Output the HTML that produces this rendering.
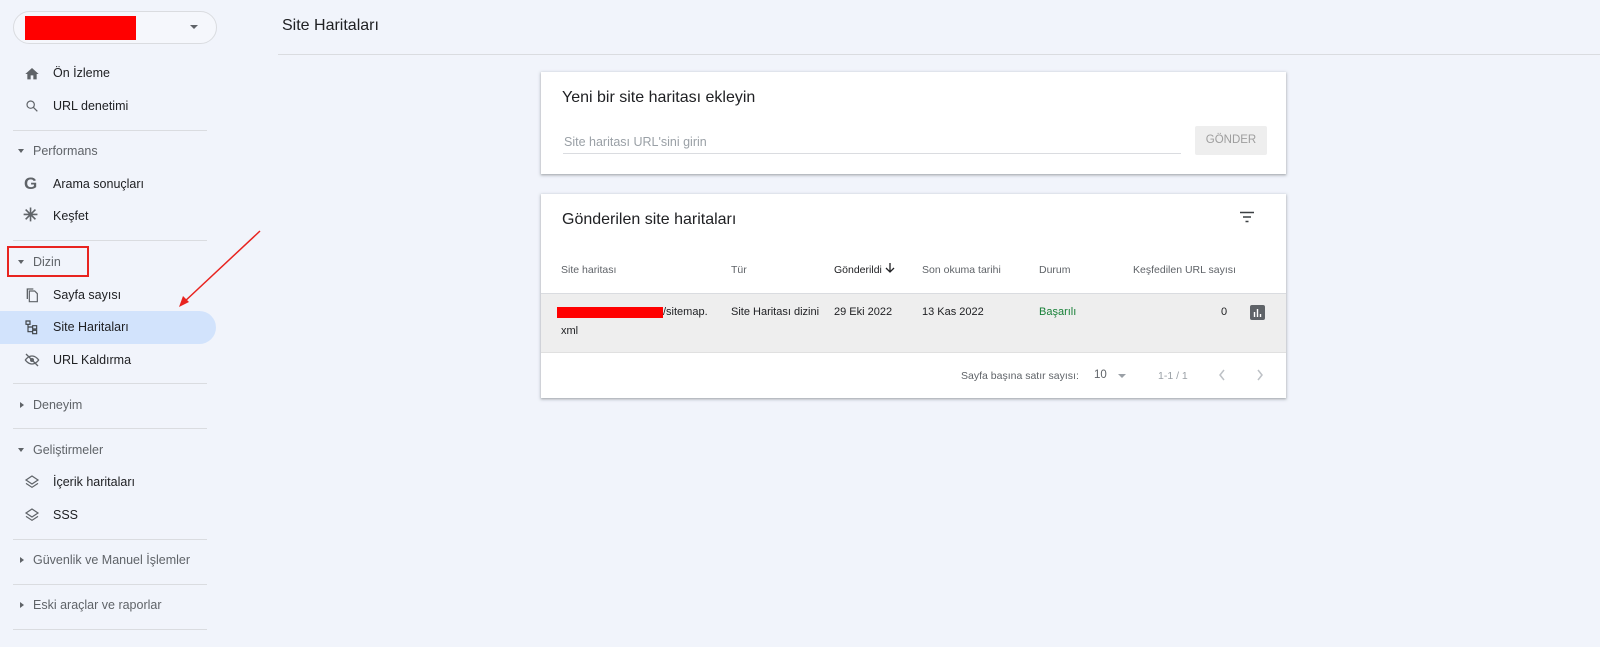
<!DOCTYPE html>
<html><head><meta charset="utf-8"><style>
*{margin:0;padding:0;box-sizing:border-box}
body{width:1600px;height:647px;background:#f1f4fb;font-family:"Liberation Sans",sans-serif;color:#202124;position:relative;overflow:hidden}
.a{position:absolute}
.nav{font-size:12.5px;color:#202124}
.sec{font-size:12.5px;color:#5f6368}
.hr{position:absolute;left:13px;width:194px;height:1px;background:#dadce0}
.ic{position:absolute;left:24px;width:16px;height:16px}
.th{position:absolute;top:264px;font-size:10.5px;color:#5f6368}
.td{position:absolute;top:306px;font-size:11px;color:#202124}
</style></head><body>
<!-- selector -->
<div class="a" style="left:13px;top:11px;width:204px;height:33px;border:1px solid #dadce0;border-radius:17px;background:#f5f7fc"></div>
<div class="a" style="left:25px;top:16px;width:111px;height:24px;background:#ff0000"></div>
<div class="a" style="left:190px;top:25px;border-left:4px solid transparent;border-right:4px solid transparent;border-top:4px solid #5f6368"></div>

<svg class="ic" style="top:66px" viewBox="0 0 24 24"><path d="M10 20v-6h4v6h5v-8h3L12 3 2 12h3v8z" fill="#5f6368"/></svg>
<div class="a nav" style="left:53px;top:66px">Ön İzleme</div>
<svg class="ic" style="top:98px" viewBox="0 0 24 24"><circle cx="10" cy="10" r="5.5" fill="none" stroke="#5f6368" stroke-width="1.8"/><path d="M14 14l6 6" stroke="#5f6368" stroke-width="1.8"/></svg>
<div class="a nav" style="left:53px;top:99px">URL denetimi</div>
<div class="hr" style="top:130px"></div>
<div class="a" style="left:18px;top:149px;border-left:3.5px solid transparent;border-right:3.5px solid transparent;border-top:4px solid #5f6368"></div>
<div class="a sec" style="left:33px;top:144px">Performans</div>
<div class="a" style="left:24px;top:174px;font-weight:bold;font-size:17px;color:#5f6368">G</div>
<div class="a nav" style="left:53px;top:177px">Arama sonuçları</div>
<div class="a" style="left:23px;top:205px;font-size:18px;color:#5f6368;font-weight:bold">✳</div>
<div class="a nav" style="left:53px;top:209px">Keşfet</div>
<div class="hr" style="top:240px"></div>
<div class="a" style="left:7px;top:246px;width:82px;height:31px;border:2px solid #e8231f"></div>
<div class="a" style="left:18px;top:260px;border-left:3.5px solid transparent;border-right:3.5px solid transparent;border-top:4px solid #5f6368"></div>
<div class="a sec" style="left:33px;top:255px">Dizin</div>
<svg class="ic" style="top:287px" viewBox="0 0 24 24"><path d="M4 2h10v2H6v14H4z" fill="#5f6368"/><path d="M8 6h8l4 4v12H8z" fill="none" stroke="#5f6368" stroke-width="1.8"/></svg>
<div class="a nav" style="left:53px;top:288px">Sayfa sayısı</div>
<div class="a" style="left:0;top:311px;width:216px;height:33px;background:#d2e3fc;border-radius:0 17px 17px 0"></div>
<svg class="ic" style="top:319px" viewBox="0 0 24 24"><path d="M3 3h6v5H3zM13 10h6v5h-6zM13 17h6v5h-6zM6 8v11h7M6 12h7" fill="none" stroke="#3c4043" stroke-width="1.7"/></svg>
<div class="a nav" style="left:53px;top:320px">Site Haritaları</div>
<svg class="ic" style="top:352px" viewBox="0 0 24 24"><path d="M2 12s4-6 10-6 10 6 10 6-4 6-10 6S2 12 2 12z" fill="none" stroke="#5f6368" stroke-width="1.8"/><circle cx="12" cy="12" r="3" fill="#5f6368"/><path d="M3 3l18 18" stroke="#5f6368" stroke-width="2"/></svg>
<div class="a nav" style="left:53px;top:353px">URL Kaldırma</div>
<div class="hr" style="top:383px"></div>
<div class="a" style="left:20px;top:402px;border-top:3.5px solid transparent;border-bottom:3.5px solid transparent;border-left:4px solid #5f6368"></div>
<div class="a sec" style="left:33px;top:398px">Deneyim</div>
<div class="hr" style="top:428px"></div>
<div class="a" style="left:18px;top:448px;border-left:3.5px solid transparent;border-right:3.5px solid transparent;border-top:4px solid #5f6368"></div>
<div class="a sec" style="left:33px;top:443px">Geliştirmeler</div>
<svg class="ic" style="top:474px" viewBox="0 0 24 24"><path d="M12 3l9 6-9 6-9-6zM3 14l9 6 9-6" fill="none" stroke="#5f6368" stroke-width="1.8"/></svg>
<div class="a nav" style="left:53px;top:475px">İçerik haritaları</div>
<svg class="ic" style="top:507px" viewBox="0 0 24 24"><path d="M12 3l9 6-9 6-9-6zM3 14l9 6 9-6" fill="none" stroke="#5f6368" stroke-width="1.8"/></svg>
<div class="a nav" style="left:53px;top:508px">SSS</div>
<div class="hr" style="top:539px"></div>
<div class="a" style="left:20px;top:557px;border-top:3.5px solid transparent;border-bottom:3.5px solid transparent;border-left:4px solid #5f6368"></div>
<div class="a sec" style="left:33px;top:553px">Güvenlik ve Manuel İşlemler</div>
<div class="hr" style="top:584px"></div>
<div class="a" style="left:20px;top:602px;border-top:3.5px solid transparent;border-bottom:3.5px solid transparent;border-left:4px solid #5f6368"></div>
<div class="a sec" style="left:33px;top:598px">Eski araçlar ve raporlar</div>
<div class="hr" style="top:629px"></div>

<!-- arrow -->
<svg class="a" style="left:170px;top:225px" width="100" height="90"><path d="M90 6L13 78" stroke="#e8231f" stroke-width="1.5"/><path d="M9 82l4-11 6 6z" fill="#e8231f"/></svg>

<!-- header -->
<div class="a" style="left:282px;top:17px;font-size:16px;color:#202124">Site Haritaları</div>
<div class="a" style="left:278px;top:54px;width:1322px;height:1px;background:#dadce0"></div>

<!-- card1 -->
<div class="a" style="left:541px;top:72px;width:745px;height:102px;background:#fff;box-shadow:0 1px 2px rgba(60,64,67,.3),0 1px 3px 1px rgba(60,64,67,.15)"></div>
<div class="a" style="left:562px;top:89px;font-size:16px">Yeni bir site haritası ekleyin</div>
<div class="a" style="left:564px;top:135px;font-size:12.5px;color:#9aa0a6">Site haritası URL'sini girin</div>
<div class="a" style="left:563px;top:153px;width:618px;height:1px;background:#dadce0"></div>
<div class="a" style="left:1195px;top:126px;width:72px;height:29px;background:#eeeeee;border-radius:2px;font-size:11.5px;color:#9e9e9e;text-align:center;line-height:29px">GÖNDER</div>

<!-- card2 -->
<div class="a" style="left:541px;top:194px;width:745px;height:204px;background:#fff;box-shadow:0 1px 2px rgba(60,64,67,.3),0 1px 3px 1px rgba(60,64,67,.15)"></div>
<div class="a" style="left:562px;top:211px;font-size:16px">Gönderilen site haritaları</div>
<svg class="a" style="left:1239px;top:211px" width="16" height="12"><path d="M1 1.5h14M4 6h8M6.5 10.5h3" stroke="#3c4043" stroke-width="1.6"/></svg>
<div class="th" style="left:561px">Site haritası</div>
<div class="th" style="left:731px">Tür</div>
<div class="th" style="left:834px;color:#202124">Gönderildi</div>
<svg class="a" style="left:885px;top:263px" width="10" height="11"><path d="M5 0v9M1 5l4 4 4-4" fill="none" stroke="#202124" stroke-width="1.3"/></svg>
<div class="th" style="left:922px">Son okuma tarihi</div>
<div class="th" style="left:1039px">Durum</div>
<div class="th" style="left:1133px">Keşfedilen URL sayısı</div>
<div class="a" style="left:541px;top:293px;width:745px;height:60px;background:#eeeeee;border-top:1px solid #dadce0;border-bottom:1px solid #e0e0e0"></div>
<div class="a" style="left:557px;top:307px;width:106px;height:11px;background:#ff0000"></div>
<div class="td" style="left:663px">/sitemap.</div>
<div class="td" style="left:561px;top:325px">xml</div>
<div class="td" style="left:731px">Site Haritası dizini</div>
<div class="td" style="left:834px">29 Eki 2022</div>
<div class="td" style="left:922px">13 Kas 2022</div>
<div class="td" style="left:1039px;color:#188038">Başarılı</div>
<div class="td" style="left:1221px">0</div>
<div class="a" style="left:1250px;top:305px;width:15px;height:15px;background:#5f6368;border-radius:2px"></div>
<svg class="a" style="left:1250px;top:305px" width="15" height="15"><path d="M4.5 7v5M7.5 4v8M10.5 9v3" stroke="#fff" stroke-width="1.4"/></svg>
<div class="a" style="left:961px;top:370px;font-size:10.5px;color:#5f6368">Sayfa başına satır sayısı:</div>
<div class="a" style="left:1094px;top:369px;font-size:11.5px;color:#5f6368">10</div>
<div class="a" style="left:1118px;top:374px;border-left:4px solid transparent;border-right:4px solid transparent;border-top:4px solid #9aa0a6"></div>
<div class="a" style="left:1158px;top:370px;font-size:10.5px;color:#9aa0a6">1-1 / 1</div>
<svg class="a" style="left:1218px;top:368px" width="60" height="14"><path d="M6 2L2 7l4 5M40 2l4 5-4 5" fill="none" stroke="#bdc1c6" stroke-width="1.5"/></svg>
</body></html>
